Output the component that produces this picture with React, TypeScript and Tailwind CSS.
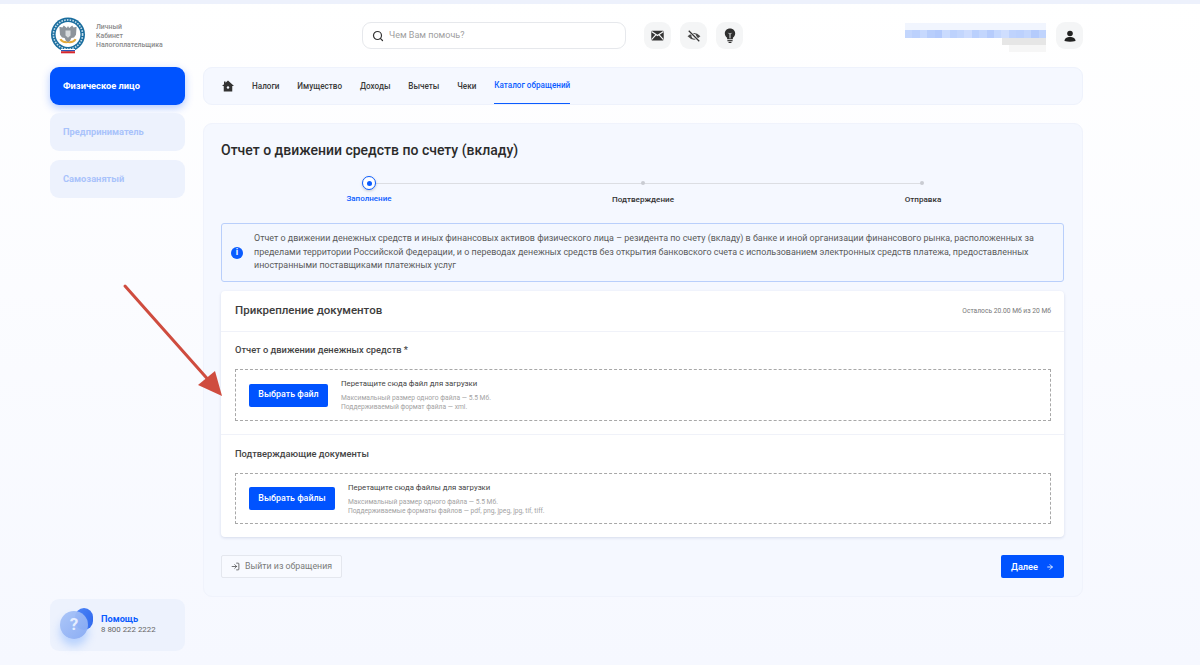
import React from "react";
import { Search, ArrowRight, LogIn } from "lucide-react";

const Logo = () => (
  <svg width="36" height="37" viewBox="0 0 36 37" className="shrink-0">
    <circle cx="18" cy="17.5" r="17" fill="#1a6d9e" />
    <circle cx="18" cy="17.5" r="14.6" fill="none" stroke="#c4dcea" strokeWidth="1.6" strokeDasharray="1.6 1.2" />
    <circle cx="18" cy="17.5" r="12.4" fill="#ffffff" />
    <path d="M18 9 l1.2 2 l3 -2.6 l1.4 2 l3 -.6 l-.6 8 l-2 2.6 l-2.6 .6 l-1.4 3 l-2 1.6 l-2 -1.6 l-1.4 -3 l-2.6 -.6 l-2 -2.6 l-.6 -8 l3 .6 l1.4 -2 l3 2.6z" fill="#8d949b" />
    <path d="M15.5 13.5 h5 v5 l-2.5 2.2 l-2.5 -2.2z" fill="#d6dadd" />
    <path d="M9.5 22.5 q2.5 4.5 8.5 3.6 q6 .9 8.5 -3.6 l-1.8 -.8 q-2 2.6 -4.2 2.2 l-2.5 1 l-2.5 -1 q-2.2 .4 -4.2 -2.2z" fill="#e2a93a" />
    <rect x="11" y="32" width="14" height="1" fill="#ffffff" />
    <rect x="11" y="33" width="14" height="1.3" fill="#2d55b5" />
    <rect x="11" y="34.3" width="14" height="2" fill="#d8262c" />
  </svg>
);

const HomeIcon = () => (
  <svg width="12" height="12" viewBox="0 0 24 24" fill="#333">
    <path d="M12 1 L24 12 L20.5 12 L20.5 23 L3.5 23 L3.5 12 L0 12 L4 8.3 L4 3 L7 3 L7 5.6z" />
    <circle cx="12" cy="15" r="2.4" fill="#f5f8ff" />
  </svg>
);

const MailIcon = () => (
  <svg width="13" height="11" viewBox="0 0 24 20">
    <rect x="0.5" y="1" width="23" height="18" rx="1.5" fill="#333" />
    <path d="M1 2.5 L12 10 L23 2.5 M1 17.5 L9 9 M23 17.5 L15 9" fill="none" stroke="#f4f5f6" strokeWidth="2.2" />
  </svg>
);

const EyeIcon = () => (
  <svg width="14" height="14" viewBox="0 0 24 24">
    <path d="M1 12.5 Q12 1 23 12.5 Q12 24 1 12.5z" fill="#4a4a4a" />
    <circle cx="12" cy="12.5" r="4" fill="#f4f5f6" />
    <line x1="3" y1="3" x2="21" y2="21" stroke="#f4f5f6" strokeWidth="4.5" />
    <line x1="3" y1="3" x2="21" y2="21" stroke="#333" strokeWidth="2.2" />
  </svg>
);

const BulbIcon = () => (
  <svg width="12" height="15" viewBox="0 0 20 26">
    <path d="M10 1 C4.5 1 1 5 1 9.5 C1 13 3 15 5 17 L5 19.5 L15 19.5 L15 17 C17 15 19 13 19 9.5 C19 5 15.5 1 10 1z" fill="#2f2f2f" />
    <path d="M10 18 L10 11 M7.5 8.5 L10 11 L12.5 8.5" fill="none" stroke="#f4f5f6" strokeWidth="1.6" />
    <rect x="5.5" y="21" width="9" height="2" fill="#2f2f2f" />
    <rect x="7.5" y="24" width="5" height="2" fill="#2f2f2f" />
  </svg>
);

const UserIcon = () => (
  <svg width="12" height="12" viewBox="0 0 24 24" fill="#222">
    <circle cx="12" cy="7" r="5.6" />
    <path d="M1 22 C1 16.5 6 14 12 14 C18 14 23 16.5 23 22 Q12 25 1 22z" />
  </svg>
);

const IconBtn = ({ children }: { children: React.ReactNode }) => (
  <div className="w-[27px] h-[27px] rounded-[9px] bg-[#f4f5f6] flex items-center justify-center">{children}</div>
);

const NavItem = ({ label, active }: { label: string; active?: boolean }) => (
  <div className={`h-full flex items-center text-[8.15px] font-medium ${active ? "text-[#0a5cff] border-b border-[#0a5cff]" : "text-[#3a3a3a]"}`}>
    {label}
  </div>
);

const SideItem = ({ label, active }: { label: string; active?: boolean }) => (
  <div
    className={`h-[38px] rounded-[9px] flex items-center pl-[13px] text-[9.3px] font-bold ${
      active ? "bg-[#0053ff] text-white shadow-[0_3px_8px_rgba(0,83,255,0.3)]" : "bg-[#edf2fd] text-[#a9c3fb]"
    }`}
  >
    {label}
  </div>
);

const Drop = ({ btn, btnW, boxH, title, line1, line2 }: { btn: string; btnW: string; boxH: string; title: string; line1: string; line2: string }) => (
  <div className={`${boxH} border border-dashed border-[#a8a8a8] flex items-center pl-[13px] gap-[13px]`}>
    <button className={`${btnW} h-[23px] rounded-[2px] bg-[#0053ff] text-white text-[8.9px] font-medium flex items-center justify-center`}>{btn}</button>
    <div className="flex flex-col">
      <div className="text-[7.8px] leading-[11px] text-[#444] mb-[5px]">{title}</div>
      <div className="text-[6.7px] leading-[9px] text-[#a3a3a3]">{line1}</div>
      <div className="text-[6.7px] leading-[9px] text-[#a3a3a3]">{line2}</div>
    </div>
  </div>
);

const row2 = [
  "bg-[#c3d6fd]", "bg-[#bcd1fd]", "bg-[#c7d9fe]", "bg-[#b8cefc]", "bg-[#b3cafc]", "bg-[#cadbfe]", "bg-[#bdd2fd]",
  "bg-[#c3d6fd]", "bg-[#cddcfe]", "bg-[#bad0fd]", "bg-[#c3d6fd]", "bg-[#b6ccfc]", "bg-[#c5d8fe]", "bg-[#cfdefe]",
  "bg-[#bfd3fd]", "bg-[#bcd1fd]", "bg-[#c3d6fd]", "bg-[#b4cbfc]", "bg-[#c0d4fd]",
];

export default function App() {
  return (
    <div className="relative w-[1200px] h-[665px] overflow-hidden font-['Roboto',sans-serif] bg-gradient-to-b from-white to-[#f6f8ff]">
      <div className="h-[4px] bg-[#edf1fc]" />
      <div className="flex pl-[50px] w-[1083px] h-[63px] items-center">
        <div className="w-[312px] flex items-center gap-[10px]">
          <Logo />
          <div className="text-[6.9px] leading-[9px] font-medium text-[#8a8a8a] mt-[2px]">
            <div>Личный</div>
            <div>Кабинет</div>
            <div>Налогоплательщика</div>
          </div>
        </div>
        <div className="w-[264px] h-[27px] rounded-[9px] border border-[#e6e8ec] bg-white flex items-center pl-[9px] gap-[5px] mr-[18px]">
          <Search size={12} strokeWidth={2.4} color="#333" />
          <span className="text-[9px] text-[#a0a0a0]">Чем Вам помочь?</span>
        </div>
        <div className="flex gap-[9px]">
          <IconBtn><MailIcon /></IconBtn>
          <IconBtn><EyeIcon /></IconBtn>
          <IconBtn><BulbIcon /></IconBtn>
        </div>
        <div className="ml-auto flex items-center gap-[10px]">
          <div className="w-[141px] flex flex-col items-end mt-[4px]">
            <div className="w-full h-[7px] bg-[#f1f5fe]" />
            <div className="w-full h-[8px] flex">
              {row2.map((c, i) => (
                <div key={i} className={`flex-1 ${c}`} />
              ))}
            </div>
            <div className="w-[44px] h-[7px] bg-[#e6e6e6]" />
            <div className="w-[37px] h-[7px] bg-[#f6f6f6]" />
          </div>
          <IconBtn><UserIcon /></IconBtn>
        </div>
      </div>

      <div className="flex pl-[50px] gap-[18px]">
        <div className="w-[135px] h-[598px] flex flex-col justify-between pb-[14px]">
          <div className="flex flex-col gap-[8px]">
            <SideItem label="Физическое лицо" active />
            <SideItem label="Предприниматель" />
            <div className="mt-[1px]">
              <SideItem label="Самозанятый" />
            </div>
          </div>
          <div className="h-[52px] rounded-[9px] bg-[#edf2fd] flex items-center pl-[10px] gap-[6px]">
            <div className="relative w-[35px] h-[38px] shrink-0">
              <div className="absolute left-[15px] top-[1.5px] w-[18px] h-[22px] rounded-full bg-gradient-to-br from-[#4f86f7] to-[#2a63ec]" />
              <div className="absolute left-0 top-[4.5px] w-[28px] h-[28px] rounded-full bg-gradient-to-br from-[#a9c4f8]/95 to-[#86a9f3]/95 shadow-[0_7px_9px_rgba(120,170,255,0.45)] flex items-center justify-center text-[#e6eeff] text-[17px] font-bold">?</div>
            </div>
            <div className="-mt-[3px]">
              <div className="text-[9.2px] leading-[12px] font-bold text-[#0a5cff]">Помощь</div>
              <div className="text-[7.9px] leading-[10px] text-[#666]">8 800 222 2222</div>
            </div>
          </div>
        </div>

        <div className="w-[880px] flex flex-col gap-[18px]">
          <div className="h-[38px] rounded-[9px] bg-[#f5f8ff] border border-[#eef2fc] flex items-center pl-[18px] gap-[18px]">
            <HomeIcon />
            <div className="h-full flex gap-[17.9px]">
              <NavItem label="Налоги" />
              <NavItem label="Имущество" />
              <NavItem label="Доходы" />
              <NavItem label="Вычеты" />
              <NavItem label="Чеки" />
              <NavItem label="Каталог обращений" active />
            </div>
          </div>

          <div className="h-[474px] rounded-[9px] bg-[#f5f8ff] border border-[#f0f3fc] px-[17px] pt-[17px]">
            <div className="text-[14px] leading-[18px] font-medium text-[#2b2b2b]">Отчет о движении средств по счету (вкладу)</div>

            <div className="relative h-[36px] mt-[17px] w-[843px]">
              <div className="absolute left-[148px] top-[7px] w-[554px] h-[1px] bg-[#dcdee3]" />
              <div className="absolute left-[141px] top-0 w-[14px] h-[14px] rounded-full bg-white border border-[#0a5cff] shadow-[0_1px_3px_rgba(0,0,0,0.2)] flex items-center justify-center">
                <div className="w-[5px] h-[5px] rounded-full bg-[#0a5cff]" />
              </div>
              <div className="absolute left-[420px] top-[5px] w-[4px] h-[4px] rounded-full bg-[#c9ccd2]" />
              <div className="absolute left-[699px] top-[5px] w-[4px] h-[4px] rounded-full bg-[#c9ccd2]" />
              <div className="absolute left-[98px] top-[17px] w-[100px] text-center text-[8px] font-medium text-[#0a5cff]">Заполнение</div>
              <div className="absolute left-[372px] top-[17px] w-[100px] text-center text-[8.1px] font-medium text-[#333]">Подтверждение</div>
              <div className="absolute left-[652px] top-[17px] w-[100px] text-center text-[8.1px] font-medium text-[#333]">Отправка</div>
            </div>

            <div className="mt-[11px] w-[843px] h-[59px] rounded-[3px] border border-[#b9cffb] bg-[#f3f7ff] flex items-center pl-[9px] gap-[11px]">
              <div className="w-[12px] h-[12px] rounded-full bg-[#0a5cff] flex items-center justify-center shrink-0">
                <span className="text-white text-[9px] leading-none font-bold">i</span>
              </div>
              <div className="text-[8.93px] leading-[13.4px] text-[#5a5a5a] w-[790px]">
                Отчет о движении денежных средств и иных финансовых активов физического лица – резидента по счету (вкладу) в банке и иной организации финансового рынка, расположенных за пределами территории Российской Федерации, и о переводах денежных средств без открытия банковского счета с использованием электронных средств платежа, предоставленных иностранными поставщиками платежных услуг
              </div>
            </div>

            <div className="mt-[9px] w-[843px] h-[246px] rounded-[4px] bg-white shadow-[0_1px_3px_rgba(30,50,110,0.14)] flex flex-col">
              <div className="h-[41px] pl-[14px] pr-[13px] flex items-center justify-between border-b border-[#f0f2f9]">
                <div className="text-[11.5px] font-medium text-[#3d3d3d]">Прикрепление документов</div>
                <div className="text-[6.7px] text-[#777]">Осталось 20.00 Мб из 20 Мб</div>
              </div>
              <div className="h-[103px] pl-[14px] pr-[13px] pt-[11px] border-b border-[#f0f2f9]">
                <div className="text-[9.3px] leading-[13px] font-medium text-[#444] mb-[13px]">Отчет о движении денежных средств *</div>
                <Drop boxH="h-[52px]" btn="Выбрать файл" btnW="w-[79px]" title="Перетащите сюда файл для загрузки" line1="Максимальный размер одного файла — 5.5 Мб." line2="Поддерживаемый формат файла — xml." />
              </div>
              <div className="pl-[14px] pr-[13px] pt-[12px]">
                <div className="text-[9.3px] leading-[13px] font-medium text-[#444] mb-[13px]">Подтверждающие документы</div>
                <Drop boxH="h-[51px]" btn="Выбрать файлы" btnW="w-[86px]" title="Перетащите сюда файлы для загрузки" line1="Максимальный размер одного файла — 5.5 Мб." line2="Поддерживаемые форматы файлов — pdf, png, jpeg, jpg, tif, tiff." />
              </div>
            </div>

            <div className="mt-[18px] w-[843px] flex justify-between">
              <button className="w-[121px] h-[23px] rounded-[2px] bg-[#f8faff] border border-[#e4e7ee] flex items-center justify-center gap-[5px] text-[8.8px] text-[#7a7a7a]">
                <LogIn size={9} color="#444" strokeWidth={2} />
                Выйти из обращения
              </button>
              <button className="w-[63px] h-[23px] rounded-[2px] bg-[#0053ff] flex items-center justify-center gap-[8px] text-[9.2px] font-medium text-white">
                Далее
                <ArrowRight size={8} strokeWidth={2.5} />
              </button>
            </div>
          </div>
        </div>
      </div>

      <svg className="absolute left-0 top-0 pointer-events-none" width="1200" height="665">
        <line x1="125" y1="286" x2="212" y2="384" stroke="#cf4c3f" strokeWidth="3" strokeLinecap="round" />
        <polygon points="222,396 198,385 215,371" fill="#cf4c3f" />
      </svg>
    </div>
  );
}
